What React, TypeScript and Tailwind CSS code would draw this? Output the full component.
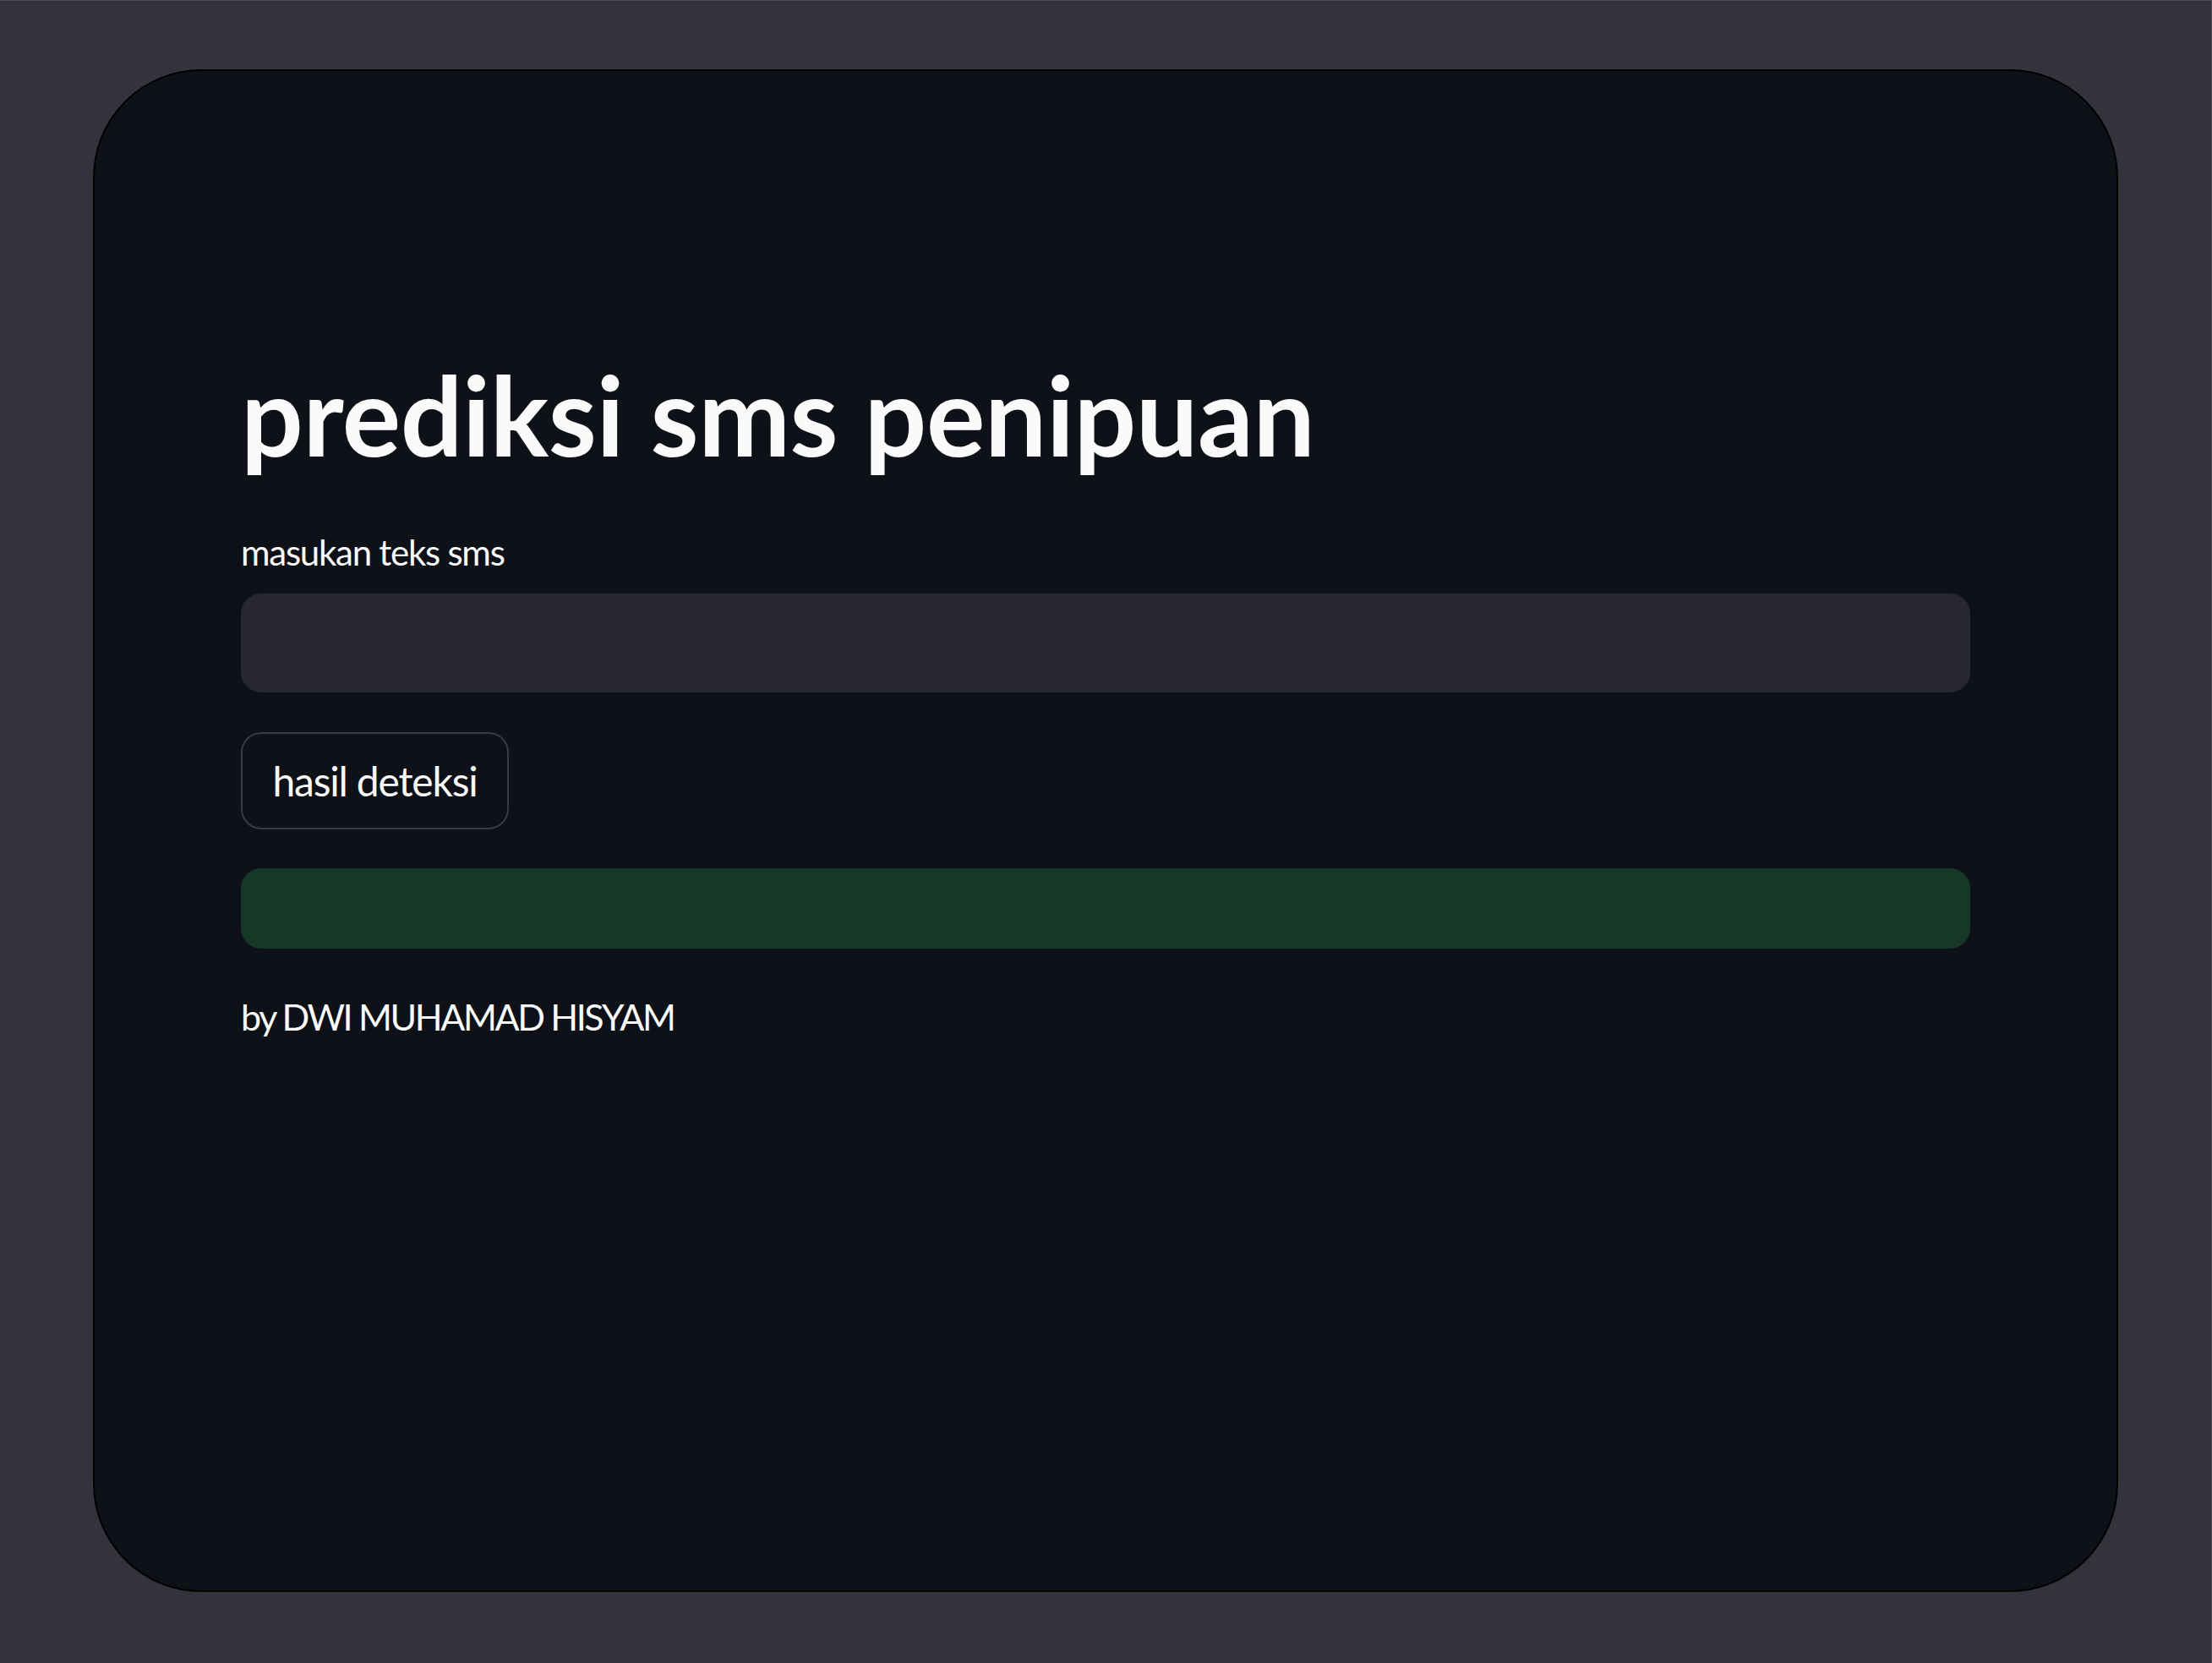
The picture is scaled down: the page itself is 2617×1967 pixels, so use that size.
export default function App() {
  return (
    <div className="min-h-screen w-full bg-[#33333d] border-t border-r border-[#4a4a54] px-[110px] pt-[81px] pb-[83px] font-['Lato',sans-serif]">
      <div className="h-[1801px] rounded-[128px] border-2 border-black bg-[#0e1117] px-[173px] pt-[328px]">
        <h1 className="text-[130px] leading-[1.2] font-bold tracking-[-0.003em] text-[#fafafa]">
          prediksi sms penipuan
        </h1>

        <label className="mt-[60px] block text-[42px] leading-[1.2] tracking-[-0.03em] text-[#fafafa]">
          masukan teks sms
        </label>
        <div className="mt-[24px] h-[117px] w-full rounded-[24px] bg-[#262730]" />

        <button className="mt-[47px] flex h-[115px] w-[317px] items-center justify-center rounded-[24px] border-2 border-[#383a44] bg-[#0e1117] text-[48px] tracking-[-0.025em] text-[#fafafa]">
          hasil deteksi
        </button>

        <div className="mt-[46px] h-[95px] w-full rounded-[24px] bg-[#173828]" />

        <p className="mt-[55px] text-[43px] leading-[1.2] tracking-[-0.055em] text-[#fafafa]">
          by DWI MUHAMAD HISYAM
        </p>
      </div>
    </div>
  );
}
